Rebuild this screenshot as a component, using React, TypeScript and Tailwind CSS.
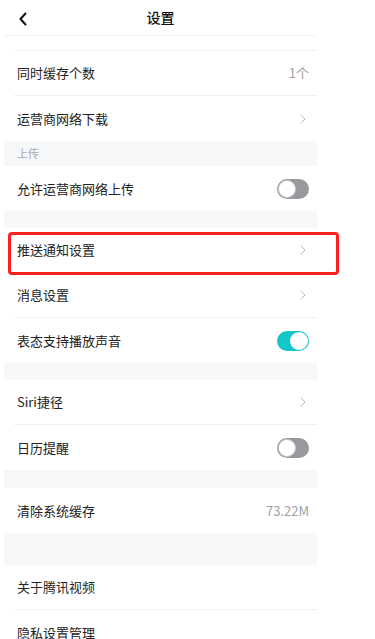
import React from "react";

type Row = {
  label: string;
  right?: "chevron" | "on" | "off" | string;
  last?: boolean;
};

function Chevron() {
  return (
    <svg width="6" height="10" viewBox="0 0 6 10" fill="none">
      <path d="M1 1 L5 5 L1 9" stroke="#b4b4b8" strokeWidth="1" strokeLinecap="round" strokeLinejoin="round" />
    </svg>
  );
}

function Toggle({ on }: { on: boolean }) {
  return (
    <div
      className={`w-[32px] h-[20px] rounded-full flex items-center px-[1px] ${
        on ? "bg-[#14c6c6] justify-end" : "bg-[#98989d] justify-start"
      }`}
    >
      <div
        className={`w-[18px] h-[18px] rounded-full bg-white ${on ? "" : "border border-[#c8c8cc]"}`}
      />
    </div>
  );
}

function SettingRow({ label, right, last }: Row) {
  return (
    <div className={`ml-[10px] h-[45px] flex items-center justify-between pl-[3px] pr-[8px] ${last ? "" : "border-b border-[#f0f0f2]"}`}>
      <span className="text-[13px] text-[#222]">{label}</span>
      {right === "chevron" && (
        <span className="pr-[3px] flex items-center">
          <Chevron />
        </span>
      )}
      {right === "on" && <Toggle on />}
      {right === "off" && <Toggle on={false} />}
      {right && right !== "chevron" && right !== "on" && right !== "off" && (
        <span className="text-[13px] text-[#a0a0a4]">{right}</span>
      )}
    </div>
  );
}

function Gap({ h }: { h: string }) {
  return <div className={`${h} bg-[#f6f7f9]`} />;
}

export default function App() {
  return (
    <div
      className="relative w-[375px] h-[639px] overflow-hidden bg-white"
      style={{ fontFamily: '"Noto Sans CJK SC", "Noto Sans", sans-serif' }}
    >
      <div className="ml-[4px] w-[313px]">
        {/* header */}
        <div className="relative h-[36px] flex items-center justify-center border-b border-[#f2f2f4]">
          <div className="absolute left-[14px] top-[12px]">
            <svg width="10" height="14" viewBox="0 0 10 14" fill="none">
              <path d="M7.5 1.5 L2.5 7 L7.5 12.5" stroke="#111" strokeWidth="2" strokeLinecap="round" strokeLinejoin="round" />
            </svg>
          </div>
          <span className="text-[14px] font-medium text-[#111]">设置</span>
        </div>
        <div className="ml-[10px] h-[15px] border-b border-[#f0f0f2]" />

        <SettingRow label="同时缓存个数" right="1个" />
        <SettingRow label="运营商网络下载" right="chevron" last />

        <div className="h-[25px] bg-[#f6f7f9] flex items-center pl-[13px]">
          <span className="text-[11px] text-[#a8a8ac]">上传</span>
        </div>
        <SettingRow label="允许运营商网络上传" right="off" last />

        <Gap h="h-[17px]" />
        <SettingRow label="推送通知设置" right="chevron" />
        <SettingRow label="消息设置" right="chevron" />
        <SettingRow label="表态支持播放声音" right="on" last />

        <Gap h="h-[17px]" />
        <SettingRow label="Siri捷径" right="chevron" />
        <SettingRow label="日历提醒" right="off" last />

        <Gap h="h-[18px]" />
        <SettingRow label="清除系统缓存" right="73.22M" last />

        <Gap h="h-[32px]" />
        <SettingRow label="关于腾讯视频" />
        <SettingRow label="隐私设置管理" last />
      </div>

      {/* annotation highlight */}
      <div className="absolute left-[8px] top-[232px] w-[331px] h-[43px] border-[3px] border-[#fa2020] rounded-[4px]" />
    </div>
  );
}
